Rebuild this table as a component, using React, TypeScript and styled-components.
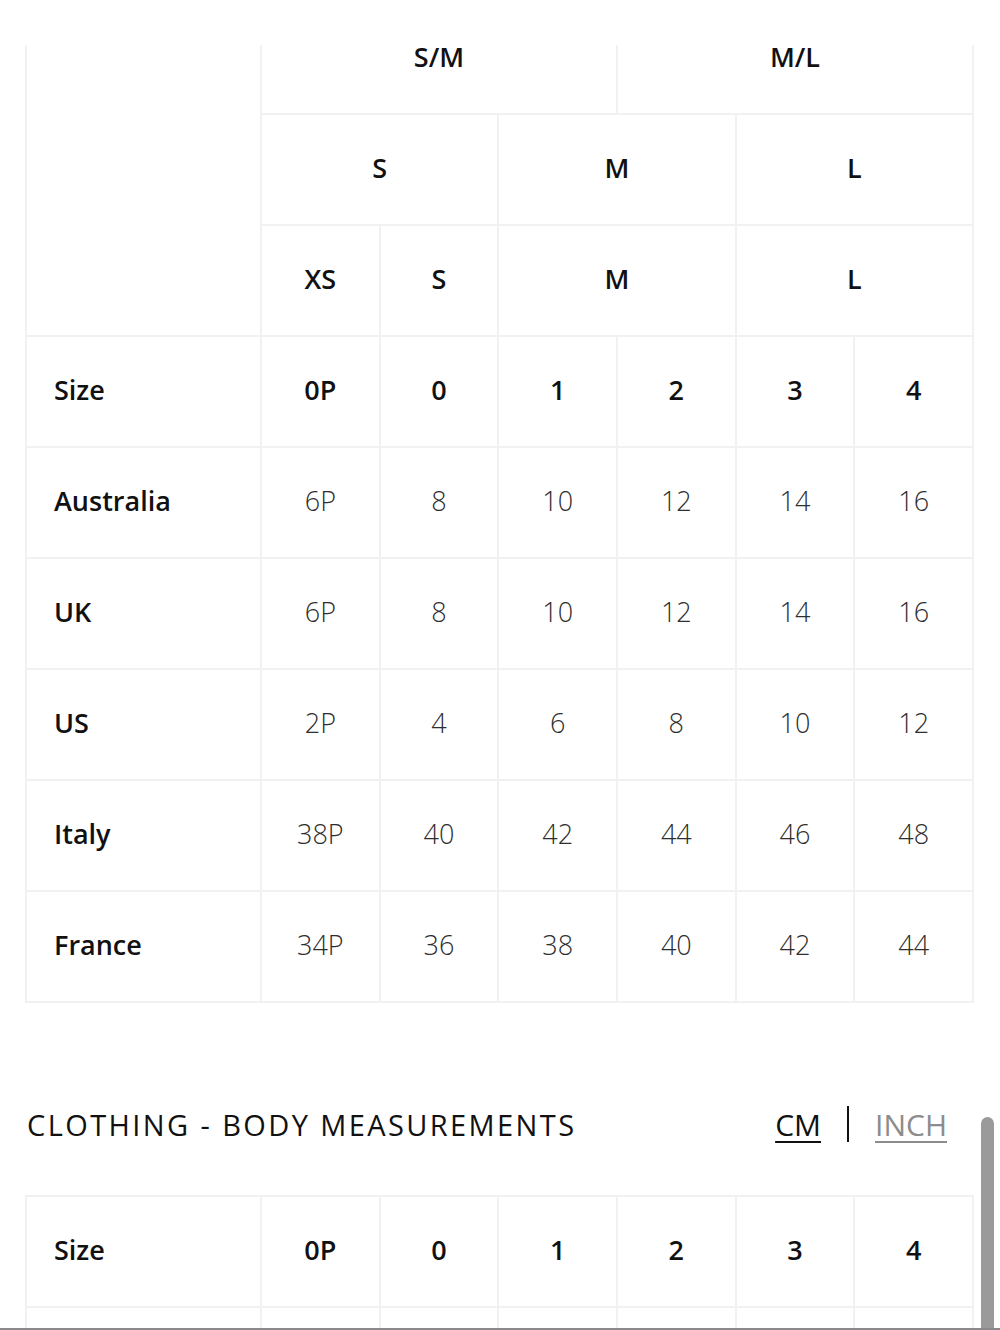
import React from 'react';
import styled, { createGlobalStyle } from 'styled-components';

const GlobalStyle = createGlobalStyle`
  html, body {
    margin: 0;
    padding: 0;
    background: #ffffff;
    font-family: 'Open Sans', 'Lato', sans-serif;
    color: #111;
  }
`;

const columns = ['0P', '0', '1', '2', '3', '4'];

const rows = [
  { label: 'Australia', values: ['6P', '8', '10', '12', '14', '16'] },
  { label: 'UK', values: ['6P', '8', '10', '12', '14', '16'] },
  { label: 'US', values: ['2P', '4', '6', '8', '10', '12'] },
  { label: 'Italy', values: ['38P', '40', '42', '44', '46', '48'] },
  { label: 'France', values: ['34P', '36', '38', '40', '42', '44'] },
];

const Page = styled.div`
  padding: 2px 27px 0 26px;
  width: 1000px;
  box-sizing: border-box;
`;

// white strip of the sticky modal header, the table scrolls under it
const TopMask = styled.div`
  position: fixed;
  top: 0;
  left: 0;
  right: 0;
  height: 45px;
  background: #fff;
`;

const Table = styled.table`
  border-collapse: collapse;
  table-layout: fixed;
  width: 949px;
  margin-left: -1px;

  col.label {
    width: 235px;
  }
`;

const Cell = styled.td<{ $head?: boolean; $label?: boolean }>`
  border: 2px solid #f1f1f1;
  height: 111px;
  padding: 0 0 5px ${(p) => (p.$label ? '27px' : '0')};
  text-align: ${(p) => (p.$label ? 'left' : 'center')};
  vertical-align: middle;
  font-size: 27px;
  font-weight: ${(p) => (p.$head || p.$label ? 600 : 300)};
  color: ${(p) => (p.$head || p.$label ? '#111' : '#2e2e2e')};
  box-sizing: border-box;
`;

const HeadRow = styled.div`
  display: flex;
  align-items: center;
  justify-content: space-between;
  margin: 82px 26px 0 1px;
  height: 78px;
  padding-bottom: 32px;
`;

const Title = styled.h2`
  margin: 0;
  font-size: 29px;
  font-weight: 400;
  letter-spacing: 2.4px;
  color: #111;
`;

const Units = styled.div`
  display: flex;
  align-items: center;
  gap: 26px;
`;

const Unit = styled.a<{ $active?: boolean }>`
  font-size: 30px;
  font-weight: 400;
  color: ${(p) => (p.$active ? '#111' : '#8c8c8c')};
  text-decoration: underline;
  text-decoration-thickness: 2px;
  text-underline-offset: 5px;
`;

const Divider = styled.span`
  width: 2px;
  height: 36px;
  background: #111;
`;

const Scrollbar = styled.div`
  position: fixed;
  right: 6px;
  top: 1117px;
  width: 13px;
  height: 220px;
  border-radius: 7px 7px 0 0;
  background: #9a9a9a;
`;

const BottomLine = styled.div`
  position: fixed;
  left: 0;
  right: 0;
  bottom: 0;
  height: 2px;
  background: #8a8a8a;
`;

const Cols = () => (
  <colgroup>
    <col className="label" />
    {columns.map((c) => (
      <col key={c} />
    ))}
  </colgroup>
);

export default function App() {
  return (
    <>
      <GlobalStyle />
      <Page>
        <Table>
          <Cols />
          <tbody>
            <tr>
              <Cell rowSpan={3} />
              <Cell $head colSpan={3}>S/M</Cell>
              <Cell $head colSpan={3}>M/L</Cell>
            </tr>
            <tr>
              <Cell $head colSpan={2}>S</Cell>
              <Cell $head colSpan={2}>M</Cell>
              <Cell $head colSpan={2}>L</Cell>
            </tr>
            <tr>
              <Cell $head>XS</Cell>
              <Cell $head>S</Cell>
              <Cell $head colSpan={2}>M</Cell>
              <Cell $head colSpan={2}>L</Cell>
            </tr>
            <tr>
              <Cell $label>Size</Cell>
              {columns.map((c) => (
                <Cell $head key={c}>{c}</Cell>
              ))}
            </tr>
            {rows.map((r) => (
              <tr key={r.label}>
                <Cell $label>{r.label}</Cell>
                {r.values.map((v, i) => (
                  <Cell key={i}>{v}</Cell>
                ))}
              </tr>
            ))}
          </tbody>
        </Table>

        <HeadRow>
          <Title>CLOTHING - BODY MEASUREMENTS</Title>
          <Units>
            <Unit $active>CM</Unit>
            <Divider />
            <Unit>INCH</Unit>
          </Units>
        </HeadRow>

        <Table>
          <Cols />
          <tbody>
            <tr>
              <Cell $label>Size</Cell>
              {columns.map((c) => (
                <Cell $head key={c}>{c}</Cell>
              ))}
            </tr>
            <tr>
              <Cell $label />
              {columns.map((c) => (
                <Cell key={c} />
              ))}
            </tr>
          </tbody>
        </Table>
      </Page>
      <TopMask />
      <Scrollbar />
      <BottomLine />
    </>
  );
}
